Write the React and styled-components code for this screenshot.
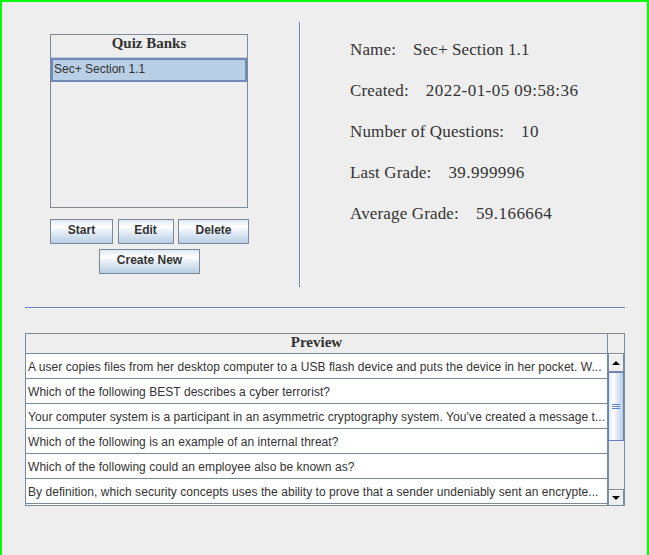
import React from "react";
import styled, { createGlobalStyle } from "styled-components";

const Global = createGlobalStyle`
  html, body { margin: 0; padding: 0; background: #eeeeee; overflow: hidden; }
  * { box-sizing: border-box; }
`;

const SANS = `"Liberation Sans", Arial, sans-serif`;
const SERIF = `"Liberation Serif", "Times New Roman", serif`;
const OCEAN = `#dde8f3 0%, #ffffff 30%, #dde8f3 60%, #b8cfe5 100%`;

const Frame = styled.div`
  width: 649px;
  height: 565px;
  overflow: hidden;
  background: #eeeeee;
  border-top: 2px solid #00ff00;
  border-left: 2px solid #00ff00;
  border-right: 2px solid #00ff00;
  display: flex;
  flex-direction: column;
`;

const Top = styled.div`
  display: flex;
  margin-top: 20px;
  padding-left: 48px;
  height: 265px;
`;

const LeftCol = styled.div`
  width: 199px;
  margin-top: 12px;
  display: flex;
  flex-direction: column;
  align-items: center;
`;

const ListBox = styled.div`
  width: 198px;
  align-self: flex-start;
  height: 174px;
  border: 1px solid #7a8a99;
  display: flex;
  flex-direction: column;
  background: #eeeeee;
`;

const ListHeader = styled.div`
  height: 23px;
  padding-bottom: 5px;
  border-bottom: 1px solid #c5ced8;
  font-family: ${SERIF};
  font-weight: bold;
  font-size: 15px;
  color: #333333;
  display: flex;
  align-items: center;
  justify-content: center;
`;

const ListRow = styled.div`
  height: 24px;
  padding: 0 0 3px 1px;
  background: ${(p) => (p.$selected ? "#b8cfe5" : "#ffffff")};
  border: 2px solid ${(p) => (p.$selected ? "#7089bb" : "transparent")};
  font-family: ${SANS};
  font-size: 12px;
  color: #333333;
  display: flex;
  align-items: center;
`;

const ButtonRow = styled.div`
  display: flex;
  justify-content: space-between;
  width: 199px;
  margin-top: 11px;
`;

const Button = styled.button`
  width: ${(p) => p.$w}px;
  height: 25px;
  padding: 0 0 4px 0;
  border: 1px solid #7a8a99;
  border-radius: 0;
  background: linear-gradient(to bottom, ${OCEAN});
  font-family: ${SANS};
  font-weight: bold;
  font-size: 12px;
  color: #333333;
  cursor: pointer;
  margin-top: ${(p) => p.$mt || 0}px;
`;

const VSep = styled.div`
  width: 2px;
  margin-left: 50px;
  border-left: 1px solid #6382bf;
  border-right: 1px solid #ffffff;
  height: 265px;
`;

const InfoCol = styled.div`
  margin-left: 49px;
  padding-top: 18px;
  display: flex;
  flex-direction: column;
  gap: 21px;
`;

const InfoLine = styled.div`
  font-family: ${SERIF};
  font-size: 17px;
  line-height: 20px;
  color: #333333;
  white-space: pre;
`;

const InfoLabel = styled.span`
  letter-spacing: 0.15px;
`;

const InfoValue = styled.span`
  letter-spacing: ${(p) => (p.$numeric ? "0.45px" : "0.1px")};
`;

const HSep = styled.div`
  margin: 20px 0 0 23px;
  width: 600px;
  height: 2px;
  border-top: 1px solid #6382bf;
  border-bottom: 1px solid #ffffff;
`;

const Table = styled.div`
  margin: 24px 0 0 23px;
  width: 600px;
  border: 1px solid #7a8a99;
  display: grid;
  grid-template-columns: 1fr 16px;
  grid-template-rows: 20px 151px;
`;

const HeaderCell = styled.div`
  border-bottom: 1px solid #7a8a99;
  border-right: 1px solid #7a8a99;
  background: #eeeeee;
  padding-bottom: 2px;
  font-family: ${SERIF};
  font-weight: bold;
  font-size: 15px;
  color: #333333;
  display: flex;
  align-items: center;
  justify-content: center;
`;

const Corner = styled.div`
  border-bottom: 1px solid #7a8a99;
  background: #eeeeee;
`;

const Rows = styled.div`
  display: flex;
  flex-direction: column;
  overflow: hidden;
  background: #ffffff;
  border-right: 1px solid #7a8a99;
`;

const Row = styled.div`
  flex: 0 0 25px;
  border-bottom: 1px solid #7a8a99;
  padding: 1px 0 0 2px;
  font-family: ${SANS};
  font-size: 12px;
  letter-spacing: 0.05px;
  color: #333333;
  white-space: nowrap;
  overflow: hidden;
  display: flex;
  align-items: center;
`;

const ScrollBar = styled.div`
  display: flex;
  flex-direction: column;
  background: #eeeeee;
`;

const Arrow = styled.div`
  flex: 0 0 ${(p) => p.$h}px;
  border: 1px solid #7a8a99;
  border-top: ${(p) => (p.$down ? "1px solid #7a8a99" : "none")};
  border-bottom: ${(p) => (p.$down ? "none" : "1px solid #7a8a99")};
  box-shadow: inset 1px 1px 0 #ffffff;
  background: #eeeeee;
  display: flex;
  align-items: center;
  justify-content: center;
  &::after {
    content: "";
    width: 0;
    height: 0;
    border-left: 4px solid transparent;
    border-right: 4px solid transparent;
    ${(p) =>
      p.$down ? "border-top: 4px solid #000000;" : "border-bottom: 4px solid #000000;"}
  }
`;

const Thumb = styled.div`
  flex: 0 0 69px;
  border: 1px solid #6382bf;
  background: linear-gradient(to right, ${OCEAN});
  display: flex;
  align-items: center;
  justify-content: center;
`;

const Grip = styled.div`
  width: 8px;
  height: 1px;
  margin-bottom: 4px;
  background: #6382bf;
  box-shadow: 0 2px 0 #6382bf, 0 4px 0 #6382bf;
`;

const Track = styled.div`
  flex: 1;
  border-left: 1px solid #7a8a99;
  background: #eeeeee;
`;

const questions = [
  "A user copies files from her desktop computer to a USB flash device and puts the device in her pocket. W...",
  "Which of the following BEST describes a cyber terrorist?",
  "Your computer system is a participant in an asymmetric cryptography system. You\u2019ve created a message t...",
  "Which of the following is an example of an internal threat?",
  "Which of the following could an employee also be known as?",
  "By definition, which security concepts uses the ability to prove that a sender undeniably sent an encrypte...",
];

const info = [
  ["Name:", "Sec+ Section 1.1", false],
  ["Created:", "2022-01-05 09:58:36", true],
  ["Number of Questions:", "10", true],
  ["Last Grade:", "39.999996", true],
  ["Average Grade:", "59.166664", true],
];

export default function App() {
  return (
    <>
      <Global />
      <Frame>
        <Top>
          <LeftCol>
            <ListBox>
              <ListHeader>Quiz Banks</ListHeader>
              <ListRow $selected>Sec+ Section 1.1</ListRow>
            </ListBox>
            <ButtonRow>
              <Button $w={63}>Start</Button>
              <Button $w={56}>Edit</Button>
              <Button $w={71}>Delete</Button>
            </ButtonRow>
            <Button $w={101} $mt={5}>Create New</Button>
          </LeftCol>
          <VSep />
          <InfoCol>
            {info.map(([k, v, n]) => (
              <InfoLine key={k}>
                <InfoLabel>{k}</InfoLabel>
                {"    "}
                <InfoValue $numeric={n}>{v}</InfoValue>
              </InfoLine>
            ))}
          </InfoCol>
        </Top>
        <HSep />
        <Table>
          <HeaderCell>Preview</HeaderCell>
          <Corner />
          <Rows>
            {questions.map((q) => (
              <Row key={q}>{q}</Row>
            ))}
          </Rows>
          <ScrollBar>
            <Arrow $h={18} />
            <Thumb>
              <Grip />
            </Thumb>
            <Track />
            <Arrow $h={16} $down />
          </ScrollBar>
        </Table>
      </Frame>
    </>
  );
}
